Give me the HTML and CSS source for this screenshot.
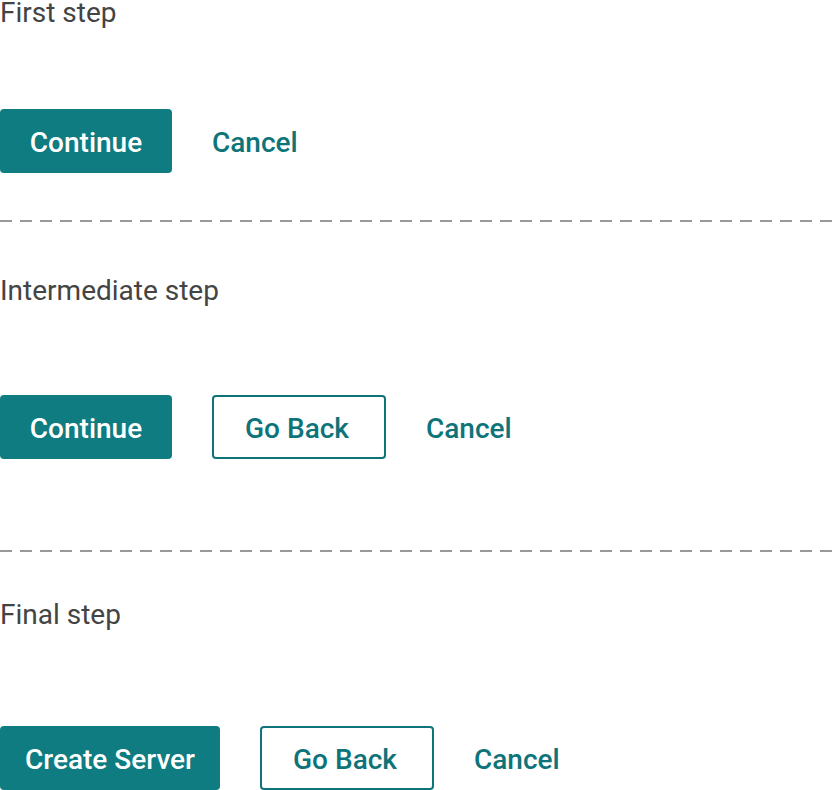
FILE: index.html
```html
<!DOCTYPE html>
<html lang="en">
<head>
<meta charset="utf-8">
<title>Wizard steps</title>
<link rel="stylesheet" href="styles.css">
</head>
<body>
  <section class="step step--first">
    <p class="step-title">First step</p>
    <div class="actions">
      <button class="btn btn--primary">Continue</button>
      <button class="btn btn--link">Cancel</button>
    </div>
  </section>
  <div class="divider divider--first"></div>
  <section class="step step--middle">
    <p class="step-title">Intermediate step</p>
    <div class="actions">
      <button class="btn btn--primary">Continue</button>
      <button class="btn btn--outline">Go Back</button>
      <button class="btn btn--link">Cancel</button>
    </div>
  </section>
  <div class="divider divider--second"></div>
  <section class="step step--final">
    <p class="step-title">Final step</p>
    <div class="actions">
      <button class="btn btn--primary">Create Server</button>
      <button class="btn btn--outline">Go Back</button>
      <button class="btn btn--link">Cancel</button>
    </div>
  </section>
</body>
</html>
```

FILE: styles.css
```css
html, body {
  margin: 0;
  padding: 0;
  background: #ffffff;
}

body {
  font-family: Roboto, "Liberation Sans", sans-serif;
  width: 832px;
  overflow: hidden;
}

.step-title {
  margin: 0;
  font-size: 28px;
  line-height: 25px;
  font-weight: 400;
  color: #444444;
}

.actions {
  display: flex;
  align-items: center;
  gap: 40px;
}

.step--first .actions { margin-top: 84px; }
.step--middle { padding-top: 56px; }
.step--middle .actions { margin-top: 92px; }
.step--final { padding-top: 50px; }
.step--final .actions { margin-top: 99px; }

.btn {
  box-sizing: border-box;
  height: 64px;
  padding-top: 4px;
  padding-bottom: 0;
  font-family: inherit;
  font-size: 28px;
  font-weight: 500;
  line-height: 1;
  border-radius: 4px;
  cursor: pointer;
  display: inline-flex;
  align-items: center;
  justify-content: center;
}

.btn--primary {
  min-width: 172px;
  padding-left: 25px;
  padding-right: 25px;
  background: #0e7c80;
  color: #ffffff;
  border: none;
}

.btn--outline {
  min-width: 174px;
  padding-left: 22px;
  padding-right: 26px;
  background: #ffffff;
  color: #0e7479;
  border: 2px solid #0e7479;
}

.btn--link {
  padding-left: 0;
  padding-right: 0;
  background: none;
  border: none;
  color: #0e7479;
}

.divider {
  height: 2px;
  background: repeating-linear-gradient(to right, #999999 0 12px, transparent 12px 20px);
}

.divider--first { margin-top: 47px; }
.divider--second { margin-top: 91px; }
```
